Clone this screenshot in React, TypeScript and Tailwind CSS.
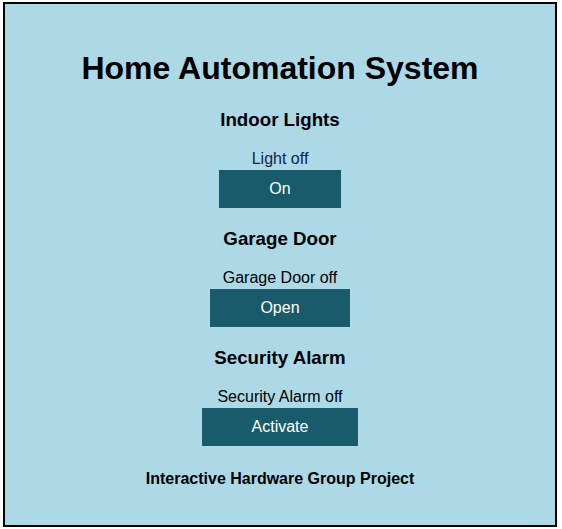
import { useState } from 'react'

type Device = {
  title: string
  label: string
  onText: string
  offText: string
  statusClass: string
}

const devices: Device[] = [
  { title: 'Indoor Lights', label: 'Light', onText: 'Off', offText: 'On', statusClass: 'text-[#10244f]' },
  { title: 'Garage Door', label: 'Garage Door', onText: 'Close', offText: 'Open', statusClass: 'text-black' },
  { title: 'Security Alarm', label: 'Security Alarm', onText: 'Deactivate', offText: 'Activate', statusClass: 'text-black' },
]

export default function App() {
  const [state, setState] = useState<boolean[]>([false, false, false])

  function toggle(i: number) {
    setState(s => s.map((v, j) => (j === i ? !v : v)))
  }

  return (
    <div className="min-h-screen bg-white pl-[3px] pt-[2px] font-['Liberation_Sans',Arial,sans-serif]">
      <div className="w-[554px] h-[525px] border-2 border-black bg-[#add8e6] flex flex-col items-center">
        <h1 className="mt-[46px] text-[32px] leading-[37px] font-bold text-black">Home Automation System</h1>

        {devices.map((d, i) => (
          <section key={d.title} className={`flex flex-col items-center ${i === 0 ? 'mt-[22px]' : 'mt-[20px]'}`}>
            <h3 className="text-[18.72px] leading-[22px] font-bold text-black">{d.title}</h3>
            <p className={`mt-[19px] text-base leading-[18px] ${d.statusClass}`}>
              {d.label} {state[i] ? 'on' : 'off'}
            </p>
            <button
              onClick={() => toggle(i)}
              className="mt-[2px] px-[50px] py-[10px] bg-[#1a5b6b] text-white text-base leading-[18px]"
            >
              {state[i] ? d.onText : d.offText}
            </button>
          </section>
        ))}

        <p className="mt-[24px] text-base leading-[18px] font-bold text-black">Interactive Hardware Group Project</p>
      </div>
    </div>
  )
}
